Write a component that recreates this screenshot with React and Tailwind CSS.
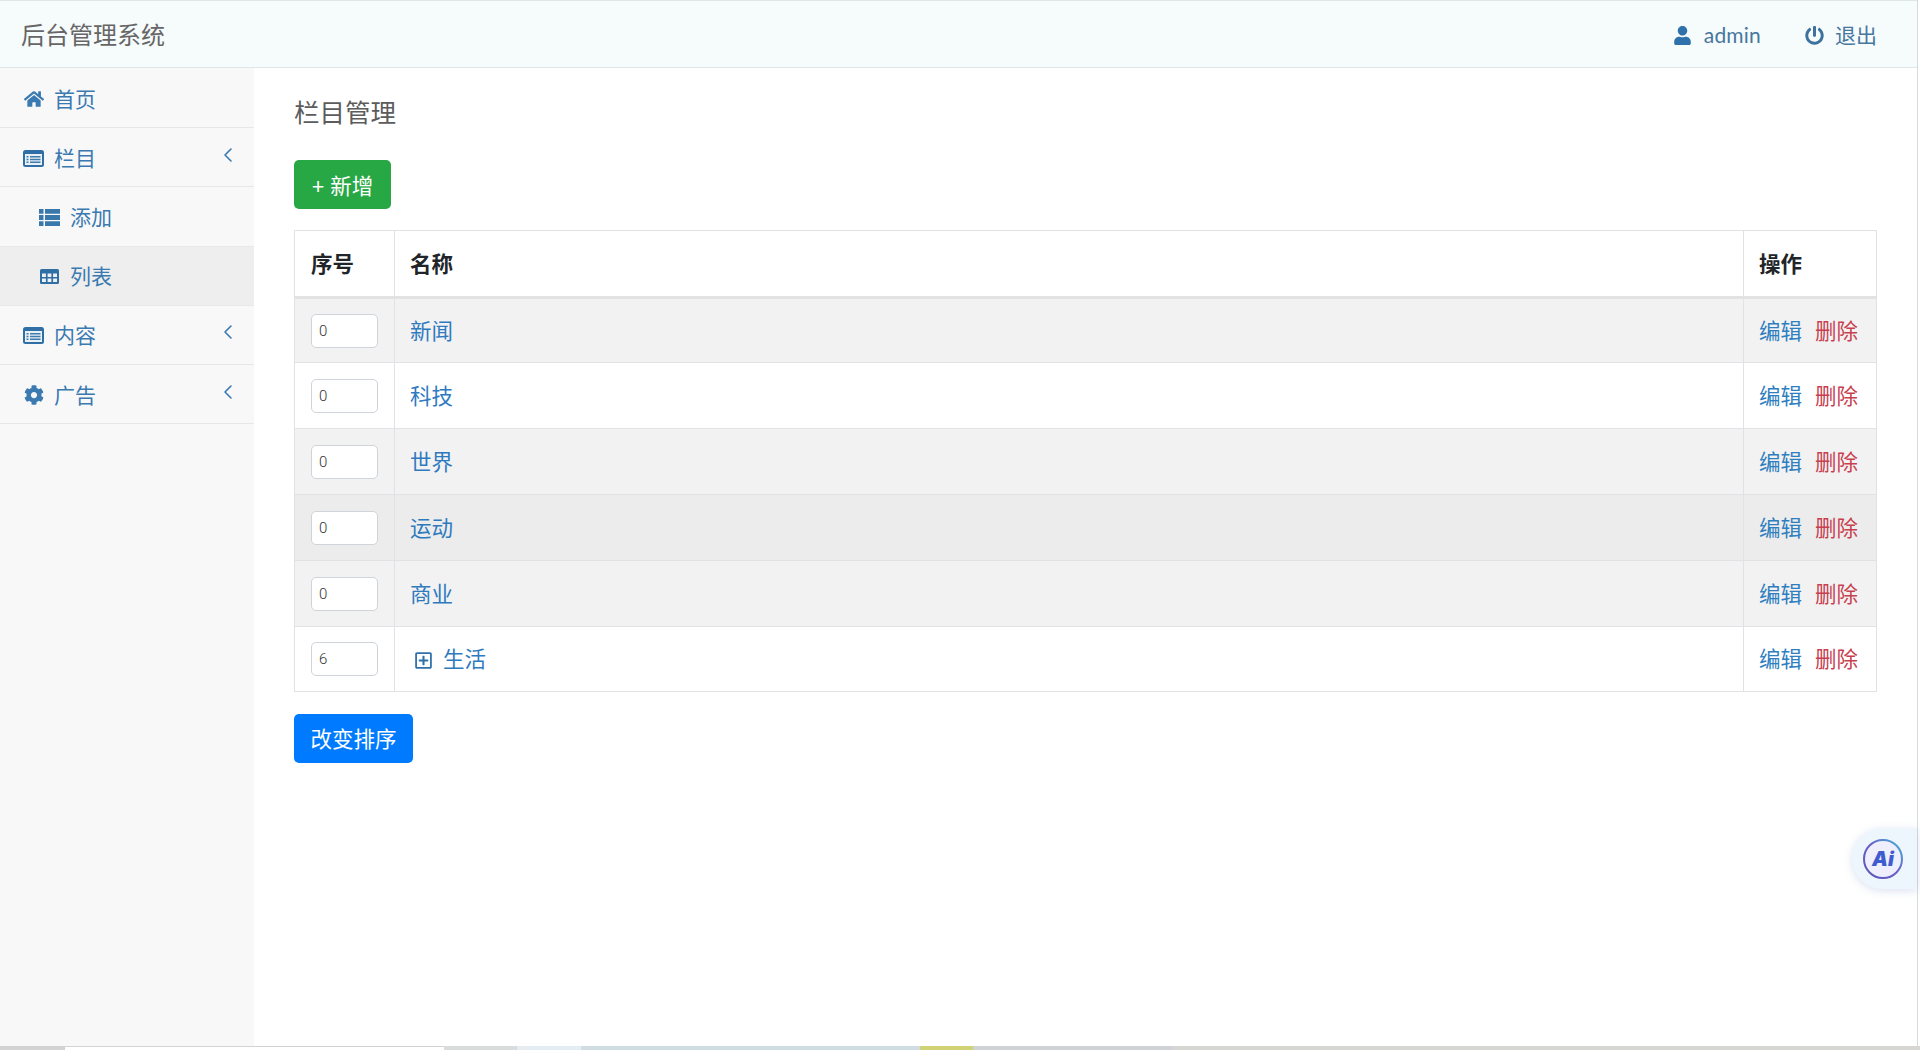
import { FaHome, FaCog, FaUser, FaPowerOff, FaRegPlusSquare } from "react-icons/fa";
import { ChevronLeft } from "lucide-react";

const rows = [
  { id: 1, sort: 0, name: "新闻", bg: "bg-[#f2f2f2]", h: "h-[65px]" },
  { id: 2, sort: 0, name: "科技", bg: "bg-white", h: "h-[66px]" },
  { id: 3, sort: 0, name: "世界", bg: "bg-[#f2f2f2]", h: "h-[66px]" },
  { id: 4, sort: 0, name: "运动", bg: "bg-[#ececec]", h: "h-[66px]" },
  { id: 5, sort: 0, name: "商业", bg: "bg-[#f2f2f2]", h: "h-[66px]" },
  { id: 6, sort: 6, name: "生活", bg: "bg-white", h: "h-[65px]", expand: true },
];

// fa-list-alt
function ListAltIcon() {
  return (
    <svg width="21" height="17" viewBox="0 0 21 17">
      <rect width="21" height="17" rx="2.5" fill="#2f6fa6" />
      <rect x="2" y="4" width="17" height="11" fill="#e9f1f7" />
      <path d="M3.5 6h2v1.4h-2zM7 6h10.5v1.4H7zM3.5 8.8h2v1.4h-2zM7 8.8h10.5v1.4H7zM3.5 11.6h2V13h-2zM7 11.6h10.5V13H7z" fill="#3f7bad" />
    </svg>
  );
}

// fa-th-list
function ThListIcon() {
  return (
    <svg width="21" height="17" viewBox="0 0 21 17">
      <path d="M0 0h4.5v4.8H0zM6 0h15v4.8H6zM0 6.1h4.5v4.8H0zM6 6.1h15v4.8H6zM0 12.2h4.5V17H0zM6 12.2h15V17H6z" fill="#3a78ab" />
    </svg>
  );
}

// fa-table
function TableIcon() {
  return (
    <svg width="19" height="15" viewBox="0 0 19 15">
      <rect width="19" height="15" rx="1.5" fill="#2f6fa6" />
      <path d="M2 4.6h3.9v3.4H2zM7.6 4.6h3.8v3.4H7.6zM13.1 4.6H17v3.4h-3.9zM2 9.5h3.9v3.5H2zM7.6 9.5h3.8v3.5H7.6zM13.1 9.5H17v3.5h-3.9z" fill="#eef2f5" />
    </svg>
  );
}

function NavItem({ icon, label, arrow, sub, active, tall, lift }) {
  return (
    <a className={`flex items-center border-b border-[#e7e7e7] text-[#3a7ab0] ${lift ? "pt-0" : "pt-[2px]"} ${tall ? "h-[60px]" : "h-[59px]"} ${sub ? "pl-[39px]" : "pl-[23px]"} ${active ? "bg-[#eeeeee]" : ""}`}>
      <span className="flex w-[21px] justify-center text-[20px]">{icon}</span>
      <span className="ml-[10px] text-[21px] leading-none">{label}</span>
      {arrow && <ChevronLeft size={24} strokeWidth={1.6} className="ml-auto mr-[14px] -mt-[7px]" />}
    </a>
  );
}

export default function App() {
  return (
    <div className="flex h-[1050px] flex-col overflow-hidden bg-white font-['Liberation_Sans','Noto_Sans_CJK_SC',sans-serif]">
      <div className="flex min-h-0 flex-1">
        <div className="flex min-w-0 flex-1 flex-col">
          {/* Top bar */}
          <header className="flex h-[68px] shrink-0 items-center justify-between border-t border-b border-[#dfe6ea] bg-[#f6fbfc] pl-[21px] pr-[40px] pt-[3px]">
            <div className="text-[24px] text-[#666666]">后台管理系统</div>
            <div className="flex items-center text-[#46779f]">
              <FaUser className="text-[19px] text-[#2f72ab]" />
              <span className="ml-[12px] -mt-[2px] font-['Lato',sans-serif] text-[21px] tracking-[0.2px]">admin</span>
              <FaPowerOff className="ml-[44px] text-[19px] text-[#3d719e]" />
              <span className="ml-[11px] text-[21px]">退出</span>
            </div>
          </header>

          <div className="flex min-h-0 flex-1">
            {/* Sidebar */}
            <aside className="w-[254px] shrink-0 bg-[#f8f8f8] pt-[1px]">
              <NavItem icon={<FaHome />} label="首页" />
              <NavItem icon={<ListAltIcon />} label="栏目" arrow />
              <NavItem icon={<ThListIcon />} label="添加" sub tall />
              <NavItem icon={<TableIcon />} label="列表" sub active lift />
              <NavItem icon={<ListAltIcon />} label="内容" arrow lift />
              <NavItem icon={<FaCog />} label="广告" arrow />
            </aside>

            {/* Main */}
            <main className="relative min-w-0 flex-1 pl-[40px] pr-[40px]">
              <h1 className="mt-[26px] text-[25.5px] leading-[38px] text-[#5c5c5c]">栏目管理</h1>
              <button className="mt-[28px] block h-[49px] w-[97px] rounded-[5px] bg-[#28a745] pt-[5px] text-[21.5px] text-white">+ 新增</button>
              <table className="mt-[21px] w-full table-fixed border-collapse text-[21.5px]">
                <thead>
                  <tr className="h-[67px] border-b-[3px] border-[#e2e2e2] text-left">
                    <th className="w-[100px] border-x border-t border-[#e0e2e6] pl-[16px] pt-[4px] font-bold text-[#212529]">序号</th>
                    <th className="border-x border-t border-[#e0e2e6] pl-[15px] pt-[4px] font-bold text-[#212529]">名称</th>
                    <th className="w-[133px] border-x border-t border-[#e0e2e6] pl-[15px] pt-[4px] font-bold text-[#212529]">操作</th>
                  </tr>
                </thead>
                <tbody>
                  {rows.map((row) => (
                    <tr key={row.id} className={`border-b border-[#e0e2e6] ${row.h} ${row.bg}`}>
                      <td className="border-x border-[#e0e2e6] pl-[16px]">
                        <input
                          readOnly
                          value={row.sort}
                          className="block h-[34px] w-[67px] rounded-[5px] border border-[#ced4da] bg-white pl-[7px] font-['Roboto',sans-serif] text-[15px] font-light text-[#333333] outline-none"
                        />
                      </td>
                      <td className="border-x border-[#e0e2e6] pl-[15px] pt-[3px] text-[#2f7abf]">
                        {row.expand ? (
                          <span className="flex items-center pl-[4px]">
                            <FaRegPlusSquare className="text-[19px] text-[#2f72ab]" />
                            <span className="ml-[10px]">{row.name}</span>
                          </span>
                        ) : (
                          row.name
                        )}
                      </td>
                      <td className="border-x border-[#e0e2e6] pl-[15px] pt-[3px]">
                        <span className="text-[#2f7fc0]">编辑</span>
                        <span className="ml-[13px] text-[#c8404f]">删除</span>
                      </td>
                    </tr>
                  ))}
                </tbody>
              </table>
              <button className="mt-[22px] block h-[49px] w-[119px] rounded-[5px] bg-[#007bff] pt-[3px] text-[21.5px] text-white">改变排序</button>

              {/* Floating AI button */}
              <div className="absolute right-0 top-[760px] flex h-[61px] w-[65px] items-center rounded-l-[31px] bg-[#eef6fd] pl-[11px] shadow-[0_2px_8px_rgba(120,140,200,0.25)]">
                <div className="relative flex h-[40px] w-[40px] items-center justify-center rounded-full bg-[#eeeefc] font-['Inter',sans-serif] text-[20px] font-black italic leading-none text-[#3f5bd0]">
                  <svg className="absolute inset-0" width="40" height="40" viewBox="0 0 40 40">
                    <defs>
                      <linearGradient id="aiRing" x1="1" y1="0" x2="0" y2="1">
                        <stop offset="0" stopColor="#3fb8d8" />
                        <stop offset="0.45" stopColor="#6a62c8" />
                        <stop offset="1" stopColor="#5a55b8" />
                      </linearGradient>
                    </defs>
                    <circle cx="20" cy="20" r="19" fill="none" stroke="url(#aiRing)" strokeWidth="2" />
                  </svg>
                  <span className="relative">Ai</span>
                </div>
              </div>
            </main>
          </div>
        </div>
        <div className="w-[3px] shrink-0 bg-[linear-gradient(to_right,#d5dcdf_1px,#ffffff_1px)]" />
      </div>

      {/* Bottom strip */}
      <div className="flex h-[4px] shrink-0 bg-[#d3d3d3]">
        <div className="w-[65px]" />
        <div className="mt-[1px] w-[379px] bg-white" />
        <div className="w-[73px] bg-[#d9dcdc]" />
        <div className="w-[64px] bg-[#e6edf2]" />
        <div className="w-[339px] bg-[#d0dde2]" />
        <div className="w-[53px] bg-[#d0d274]" />
        <div className="w-[200px] bg-[#cfd3d6]" />
        <div className="flex-1 bg-[#d8d6d2]" />
      </div>
    </div>
  );
}
